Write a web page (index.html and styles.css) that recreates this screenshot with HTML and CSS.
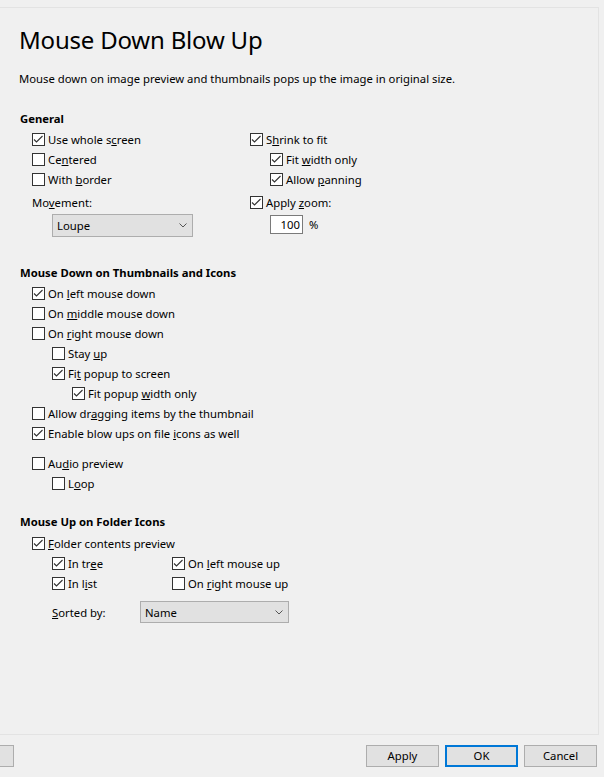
FILE: index.html
```html
<!DOCTYPE html>
<html lang="en">
<head>
<meta charset="utf-8">
<title>Mouse Down Blow Up</title>
<link rel="stylesheet" href="styles.css">
</head>
<body>
<div class="panel">
  <h1 class="title">Mouse Down Blow Up</h1>
  <p class="desc">Mouse down on image preview and thumbnails pops up the image in original size.</p>

  <div class="heading h-general">General</div>
  <div class="general">
    <div class="gcol">
      <div class="row"><span class="cb on"></span><span>Use whole s<u>c</u>reen</span></div>
      <div class="row"><span class="cb"></span><span>Ce<u>n</u>tered</span></div>
      <div class="row"><span class="cb"></span><span>With <u>b</u>order</span></div>
      <div class="row row-gap"><span>Mo<u>v</u>ement:</span></div>
      <div class="select select-loupe"><span>Loupe</span><span class="chev"></span></div>
    </div>
    <div class="gcol">
      <div class="row"><span class="cb on"></span><span>S<u>h</u>rink to fit</span></div>
      <div class="row ind1"><span class="cb on"></span><span>Fit <u>w</u>idth only</span></div>
      <div class="row ind1"><span class="cb on"></span><span>Allow <u>p</u>anning</span></div>
      <div class="row row-gap"><span class="cb on"></span><span>Apply <u>z</u>oom:</span></div>
      <div class="zoom"><span class="zoom-input">100</span><span class="pct">%</span></div>
    </div>
  </div>

  <div class="heading h-thumbs">Mouse Down on Thumbnails and Icons</div>
  <div class="list">
    <div class="row"><span class="cb on"></span><span>On <u>l</u>eft mouse down</span></div>
    <div class="row"><span class="cb"></span><span>On <u>m</u>iddle mouse down</span></div>
    <div class="row"><span class="cb"></span><span>On <u>r</u>ight mouse down</span></div>
    <div class="row ind1"><span class="cb"></span><span>Stay <u>u</u>p</span></div>
    <div class="row ind1"><span class="cb on"></span><span>Fi<u>t</u> popup to screen</span></div>
    <div class="row ind2"><span class="cb on"></span><span>Fit popup <u>w</u>idth only</span></div>
    <div class="row"><span class="cb"></span><span>Allow dr<u>a</u>gging items by the thumbnail</span></div>
    <div class="row"><span class="cb on"></span><span>Enable blow ups on file <u>i</u>cons as well</span></div>
    <div class="row row-sep"><span class="cb"></span><span>Au<u>d</u>io preview</span></div>
    <div class="row ind1"><span class="cb"></span><span>L<u>o</u>op</span></div>
  </div>

  <div class="heading h-folder">Mouse Up on Folder Icons</div>
  <div class="list list-folder">
    <div class="row"><span class="cb on"></span><span><u>F</u>older contents preview</span></div>
    <div class="folder-grid">
      <div class="row"><span class="cb on"></span><span>In tr<u>e</u>e</span></div>
      <div class="row"><span class="cb on"></span><span>On <u>l</u>eft mouse up</span></div>
      <div class="row"><span class="cb on"></span><span>In l<u>i</u>st</span></div>
      <div class="row"><span class="cb"></span><span>On <u>r</u>ight mouse up</span></div>
    </div>
    <div class="sorted">
      <span class="sorted-label"><u>S</u>orted by:</span>
      <div class="select select-name"><span>Name</span><span class="chev"></span></div>
    </div>
  </div>
</div>

<div class="buttons">
  <div class="btn btn-cut"></div>
  <div class="spacer"></div>
  <div class="btn">Apply</div>
  <div class="btn btn-default">OK</div>
  <div class="btn">Cancel</div>
</div>
</body>
</html>
```

FILE: styles.css
```css
html, body {
  margin: 0;
  padding: 0;
}
body {
  width: 604px;
  height: 777px;
  overflow: hidden;
  background: #f0f0f0;
  color: #000;
  font-family: "Noto Sans", "Liberation Sans", sans-serif;
  font-size: 11.3px;
}
.panel {
  box-sizing: border-box;
  margin-top: 7px;
  width: 599px;
  height: 728px;
  border-top: 1px solid #e3e3e3;
  border-right: 1px solid #e3e3e3;
  border-bottom: 1px solid #e3e3e3;
  padding-left: 19px;
}
.title {
  margin: 16px 0 0 0;
  height: 32px;
  line-height: 32px;
  font-size: 24px;
  font-weight: 400;
  letter-spacing: -0.2px;
}
.desc {
  margin: 13px 0 0 0;
  height: 20px;
  line-height: 20px;
}
.heading {
  height: 20px;
  line-height: 20px;
  font-weight: bold;
  padding-left: 1px;
}
.h-general { margin-top: 20px; }
.h-thumbs { margin-top: 26px; }
.h-folder { margin-top: 19px; }
.list-folder { margin-top: 1px; }

.row {
  height: 20px;
  display: flex;
  align-items: center;
  white-space: nowrap;
}
.ind1 { padding-left: 20px; }
.ind2 { padding-left: 40px; }
.row-gap { margin-top: 3px; }
.row-sep { margin-top: 10px; }

.cb {
  box-sizing: border-box;
  flex: none;
  width: 13px;
  height: 13px;
  margin-right: 3px;
  border: 1px solid #333;
  background: #fff;
}
.cb.on {
  background: #fff url("data:image/svg+xml,%3Csvg xmlns='http://www.w3.org/2000/svg' width='11' height='11' viewBox='0 0 11 11'%3E%3Cpolyline points='1,5.5 3.5,8 9.5,2' fill='none' stroke='%23333' stroke-width='1.1'/%3E%3C/svg%3E") no-repeat 0 0;
}

.general {
  display: grid;
  grid-template-columns: 218px auto;
  padding-left: 13px;
}
.list {
  padding-left: 13px;
}

.select {
  box-sizing: border-box;
  display: flex;
  align-items: center;
  justify-content: space-between;
  height: 23px;
  padding: 0 4px 0 4px;
  background: #e1e1e1;
  border: 1px solid #adadad;
}
.chev {
  width: 8px;
  height: 5px;
  background: url("data:image/svg+xml,%3Csvg xmlns='http://www.w3.org/2000/svg' width='8' height='5' viewBox='0 0 8 5'%3E%3Cpolyline points='0.5,0.5 4,4 7.5,0.5' fill='none' stroke='%23555' stroke-width='1'/%3E%3C/svg%3E") no-repeat;
}
.select-loupe {
  margin: 2px 0 0 20px;
  width: 141px;
}
.select-loupe .chev { margin-right: 1px; }

.zoom {
  display: flex;
  align-items: center;
  margin: 3px 0 0 20px;
  height: 19px;
}
.zoom-input {
  box-sizing: border-box;
  width: 33px;
  height: 19px;
  line-height: 17px;
  border: 1px solid #7a7a7a;
  background: #fff;
  text-align: right;
  padding-right: 2px;
}
.pct { margin-left: 6px; }

.folder-grid {
  display: grid;
  grid-template-columns: 120px auto;
  padding-left: 20px;
}
.sorted {
  display: flex;
  align-items: center;
  margin-top: 8px;
  padding-left: 20px;
  height: 22px;
}
.sorted-label {
  width: 88px;
}
.select-name {
  width: 149px;
  height: 22px;
}
.select-name .chev { margin-right: 1px; }

.buttons {
  display: flex;
  gap: 6px;
  margin-top: 10px;
  padding-right: 7px;
}
.spacer { flex: 1; }
.btn {
  box-sizing: border-box;
  width: 73px;
  height: 22px;
  line-height: 20px;
  text-align: center;
  background: #e1e1e1;
  border: 1px solid #adadad;
}
.btn-cut {
  width: 14px;
  border-left: none;
}
.btn-default {
  border: 2px solid #0078d7;
  line-height: 18px;
}
```
